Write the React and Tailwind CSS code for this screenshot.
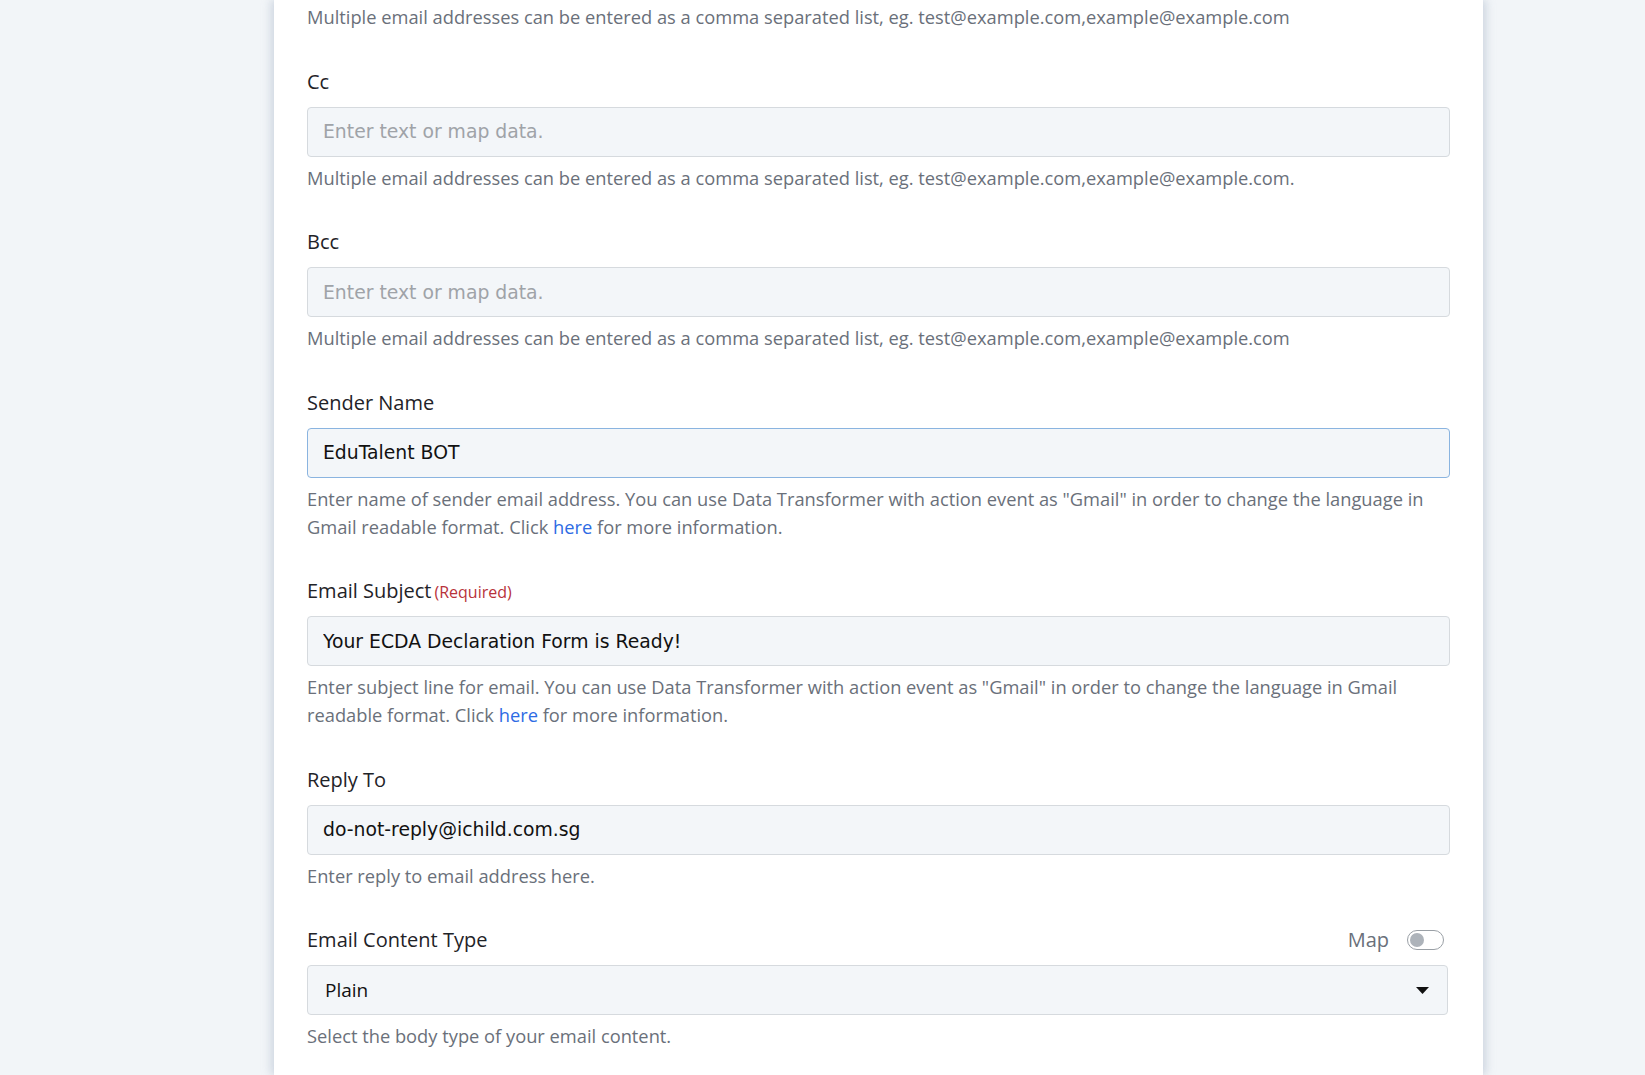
import React from "react";

const EMAIL_HINT =
  "Multiple email addresses can be entered as a comma separated list, eg. test@example.com,example@example.com";

const Label = ({ children, required }) => (
  <div className="flex items-baseline h-6 leading-6 text-[20px] text-[#1f2328]">
    <span>{children}</span>
    {required && <span className="ml-[3px] text-[16px] text-[#b8323a]">(Required)</span>}
  </div>
);

const Help = ({ children }) => (
  <p className="mt-[7px] text-[18.3px] leading-[28px] text-[#6a707a]">{children}</p>
);

const TextInput = ({ value, placeholder, focused }) => (
  <input
    readOnly
    value={value}
    placeholder={placeholder}
    className={`mt-[13px] block w-full h-[50px] px-[15px] rounded-[4px] border bg-[#f3f6f9] text-[18.8px] text-[#111] placeholder:text-[#9fa3a8] outline-none ${
      focused ? "border-[#8ab4e0]" : "border-[#d6dade]"
    }`}
    style={{ fontFamily: '"DejaVu Sans", Verdana, sans-serif' }}
  />
);

const Field = ({ label, required, value, placeholder, focused, children }) => (
  <div className="mt-[38.5px]">
    <Label required={required}>{label}</Label>
    <TextInput value={value} placeholder={placeholder} focused={focused} />
    <Help>{children}</Help>
  </div>
);

const Link = ({ children }) => <a className="text-[#2d6be4]">{children}</a>;

export default function App() {
  return (
    <div
      className="h-[1075px] w-full overflow-hidden bg-[#f2f5f8]"
      style={{ fontFamily: '"Open Sans", Lato, sans-serif' }}
    >
      <div className="ml-[274px] w-[1209px] h-full bg-white px-[33px] pt-[3px] shadow-[-4px_0_8px_rgba(160,175,195,0.35),4px_0_8px_rgba(160,175,195,0.35)]">
        <p className="text-[18.3px] leading-[28px] text-[#6a707a]">{EMAIL_HINT}</p>

        <Field label="Cc" placeholder="Enter text or map data." value="">
          {EMAIL_HINT}.
        </Field>

        <Field label="Bcc" placeholder="Enter text or map data." value="">
          {EMAIL_HINT}
        </Field>

        <Field label="Sender Name" value="EduTalent BOT" focused>
          Enter name of sender email address. You can use Data Transformer with action event as
          "Gmail" in order to change the language in
          <br />
          Gmail readable format. Click <Link>here</Link> for more information.
        </Field>

        <Field label="Email Subject" required value="Your ECDA Declaration Form is Ready!">
          Enter subject line for email. You can use Data Transformer with action event as "Gmail"
          in order to change the language in Gmail
          <br />
          readable format. Click <Link>here</Link> for more information.
        </Field>

        <Field label="Reply To" value="do-not-reply@ichild.com.sg">
          Enter reply to email address here.
        </Field>

        <div className="mt-[38.5px]">
          <div className="flex items-center justify-between pr-[6px]">
            <Label>Email Content Type</Label>
            <div className="flex items-center gap-[18px]">
              <span className="text-[20px] leading-6 text-[#6a707a]">Map</span>
              <span className="flex items-center w-[37px] h-[20px] rounded-full border border-[#9aa0a6] px-[2px]">
                <span className="w-[14px] h-[14px] rounded-full bg-[#adb3ba]" />
              </span>
            </div>
          </div>
          <div className="mt-[13px] mr-[2px] flex items-center justify-between h-[50px] pl-[17px] pr-[18px] rounded-[4px] border border-[#d6dade] bg-[#f3f6f9] text-[19px] text-[#111]">
            <span>Plain</span>
            <svg width="13" height="7" viewBox="0 0 13 7">
              <path d="M0 0h13L6.5 7z" fill="#111" />
            </svg>
          </div>
          <Help>Select the body type of your email content.</Help>
        </div>
      </div>
    </div>
  );
}
